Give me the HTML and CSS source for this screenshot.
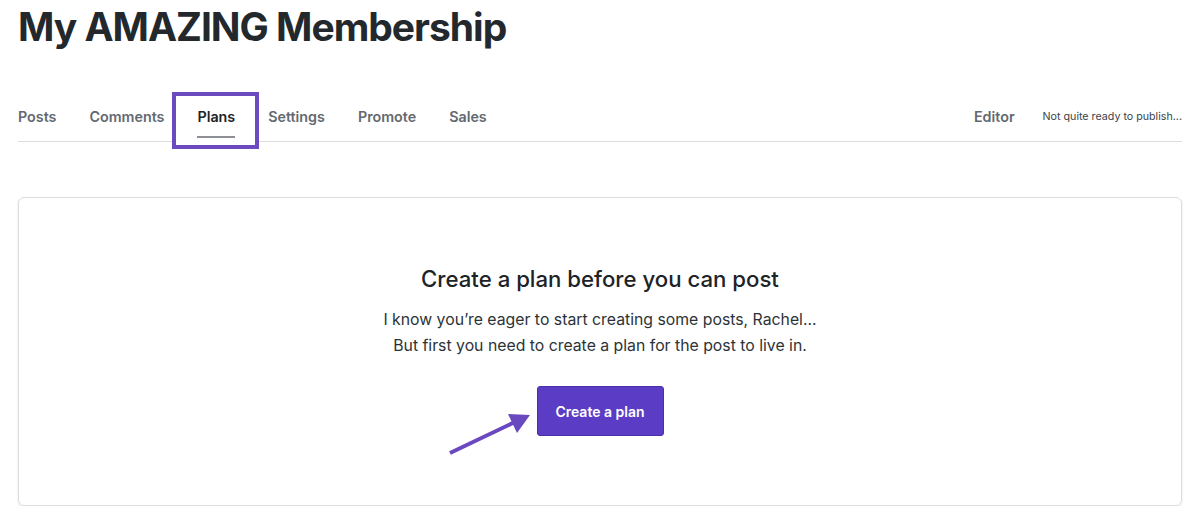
FILE: index.html
```html
<!DOCTYPE html>
<html>
<head>
<meta charset="utf-8">
<link rel="stylesheet" href="styles.css">
</head>
<body>
<div class="page">
  <h1 class="title">My AMAZING Membership</h1>
  <nav class="nav">
    <div class="tabs">
      <span class="tab">Posts</span>
      <span class="tab">Comments</span>
      <span class="tab tab-active"><span class="highlight"></span><span class="label">Plans</span></span>
      <span class="tab">Settings</span>
      <span class="tab">Promote</span>
      <span class="tab">Sales</span>
    </div>
    <div class="nav-right">
      <span class="tab">Editor</span>
      <span class="status">Not quite ready to publish...</span>
    </div>
  </nav>
  <section class="card">
    <h2 class="card-title">Create a plan before you can post</h2>
    <p class="card-text">I know you’re eager to start creating some posts, Rachel...<br>But first you need to create a plan for the post to live in.</p>
    <button class="btn">Create a plan</button>
    <svg class="arrow" width="90" height="50" viewBox="0 0 90 50">
      <line x1="3" y1="43" x2="70" y2="11" stroke="#6a48c0" stroke-width="4" stroke-linecap="butt"/>
      <polygon points="61,4 83,5 70,23" fill="#6a48c0"/>
    </svg>
  </section>
</div>
</body>
</html>
```
FILE: styles.css
```css
* { box-sizing: border-box; }
html, body { margin: 0; padding: 0; background: #fff; }
body { font-family: Inter, "Noto Sans", sans-serif; color: #1d2327; }
.page { padding: 0 18px; }
.title {
  margin: 0;
  font-size: 39px;
  line-height: 54px;
  font-weight: 700;
  color: #23282d;
  letter-spacing: -1px;
}
.nav {
  margin-top: 38px;
  height: 50px;
  display: flex;
  justify-content: space-between;
  align-items: center;
  border-bottom: 1px solid #dcdcde;
}
.tabs { display: flex; gap: 33px; height: 100%; align-items: center; }
.tab {
  font-size: 14.3px;
  font-weight: 600;
  color: #646970;
  position: relative;
  height: 100%;
  display: flex;
  align-items: center;
}
.tab-active { color: #1d2327; }
.label { position: relative; z-index: 2; }
.label::after {
  content: "";
  position: absolute;
  left: 0; right: 0;
  bottom: -13px;
  height: 2px;
  background: #8c8f94;
}
.highlight {
  position: absolute;
  left: -25px; right: -24px;
  top: 0; bottom: -8px;
  border: 4px solid #6c4bc1;
  background: #fff;
  z-index: 1;
}
.nav-right { display: flex; align-items: center; gap: 28px; height: 100%; }
.status { font-size: 10.7px; color: #3c434a; }
.card {
  position: relative;
  margin-top: 55px;
  height: 309px;
  border: 1px solid #dcdcde;
  border-radius: 6px;
  box-shadow: 0 2px 3px rgba(0,0,0,0.08);
  display: flex;
  flex-direction: column;
  align-items: center;
  padding-top: 66px;
}
.card-title {
  margin: 0;
  font-size: 22.2px;
  line-height: 30px;
  font-weight: 500;
  color: #1d2327;
}
.card-text {
  margin: 13px 0 0;
  font-size: 15.8px;
  line-height: 26px;
  text-align: center;
  color: #2c3338;
}
.btn {
  margin-top: 27px;
  width: 127px;
  height: 50px;
  border: 1px solid #4b2fa8;
  border-radius: 3px;
  background: #5b3cc4;
  color: #fff;
  font-family: Inter, "Noto Sans", sans-serif;
  font-size: 14px;
  font-weight: 600;
}
.arrow { position: absolute; left: 428px; top: 212px; }
```
